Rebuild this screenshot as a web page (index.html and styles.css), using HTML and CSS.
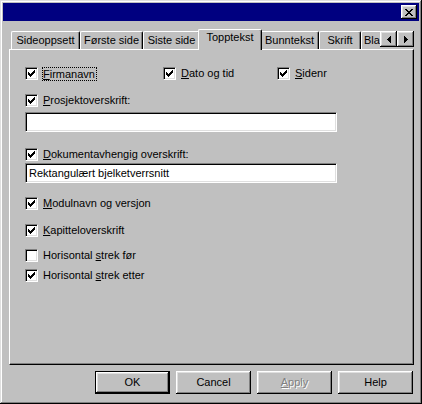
FILE: index.html
```html
<!DOCTYPE html>
<html>
<head>
<meta charset="utf-8">
<title>Topptekst</title>
<link rel="stylesheet" href="styles.css">
</head>
<body>
<div class="window">
  <div class="titlebar">
    <div class="close">
      <svg width="8" height="7" viewBox="0 0 8 7" shape-rendering="crispEdges"><path d="M0 0h2v1H0z M6 0h2v1H6z M1 1h2v1H1z M5 1h2v1H5z M2 2h4v1H2z M3 3h2v1H3z M2 4h4v1H2z M1 5h2v1H1z M5 5h2v1H5z M0 6h2v1H0z M6 6h2v1H6z" fill="#000"/></svg>
    </div>
  </div>
  <div class="content">
    <div class="tabrow">
      <div class="tabs">
        <div class="tab w1">Sideoppsett</div>
        <div class="tab w2">Første side</div>
        <div class="tab w3">Siste side</div>
        <div class="tab w4 active">Topptekst</div>
        <div class="tab w5">Bunntekst</div>
        <div class="tab w6">Skrift</div>
        <div class="tab w7">Blad</div>
      </div>
      <div class="arrows">
        <div class="arrow"><svg width="4" height="7" viewBox="0 0 4 7" shape-rendering="crispEdges"><path d="M3 0h1v7H3z M2 1h1v5H2z M1 2h1v3H1z M0 3h1v1H0z" fill="#000"/></svg></div>
        <div class="arrow"><svg width="4" height="7" viewBox="0 0 4 7" shape-rendering="crispEdges"><path d="M0 0h1v7H0z M1 1h1v5H1z M2 2h1v3H2z M3 3h1v1H3z" fill="#000"/></svg></div>
      </div>
    </div>
    <div class="panel">
      <div class="row-three">
        <div class="check">
          <span class="cb"><svg width="7" height="7" viewBox="0 0 7 7" shape-rendering="crispEdges"><path d="M0 2h1v3H0z M1 3h1v3H1z M2 4h1v3H2z M3 3h1v3H3z M4 2h1v3H4z M5 1h1v3H5z M6 0h1v3H6z" fill="#000"/></svg></span>
          <span class="label focus"><u>F</u>irmanavn</span>
        </div>
        <div class="check">
          <span class="cb"><svg width="7" height="7" viewBox="0 0 7 7" shape-rendering="crispEdges"><path d="M0 2h1v3H0z M1 3h1v3H1z M2 4h1v3H2z M3 3h1v3H3z M4 2h1v3H4z M5 1h1v3H5z M6 0h1v3H6z" fill="#000"/></svg></span>
          <span class="label"><u>D</u>ato og tid</span>
        </div>
        <div class="check">
          <span class="cb"><svg width="7" height="7" viewBox="0 0 7 7" shape-rendering="crispEdges"><path d="M0 2h1v3H0z M1 3h1v3H1z M2 4h1v3H2z M3 3h1v3H3z M4 2h1v3H4z M5 1h1v3H5z M6 0h1v3H6z" fill="#000"/></svg></span>
          <span class="label"><u>S</u>idenr</span>
        </div>
      </div>

      <div class="check m14">
        <span class="cb"><svg width="7" height="7" viewBox="0 0 7 7" shape-rendering="crispEdges"><path d="M0 2h1v3H0z M1 3h1v3H1z M2 4h1v3H2z M3 3h1v3H3z M4 2h1v3H4z M5 1h1v3H5z M6 0h1v3H6z" fill="#000"/></svg></span>
        <span class="label"><u>P</u>rosjektoverskrift:</span>
      </div>
      <div class="field m5"></div>

      <div class="check m16">
        <span class="cb"><svg width="7" height="7" viewBox="0 0 7 7" shape-rendering="crispEdges"><path d="M0 2h1v3H0z M1 3h1v3H1z M2 4h1v3H2z M3 3h1v3H3z M4 2h1v3H4z M5 1h1v3H5z M6 0h1v3H6z" fill="#000"/></svg></span>
        <span class="label"><u>D</u>okumentavhengig overskrift:</span>
      </div>
      <div class="field m2">Rektangulært bjelketverrsnitt</div>

      <div class="check m14">
        <span class="cb"><svg width="7" height="7" viewBox="0 0 7 7" shape-rendering="crispEdges"><path d="M0 2h1v3H0z M1 3h1v3H1z M2 4h1v3H2z M3 3h1v3H3z M4 2h1v3H4z M5 1h1v3H5z M6 0h1v3H6z" fill="#000"/></svg></span>
        <span class="label"><u>M</u>odulnavn og versjon</span>
      </div>
      <div class="check m14">
        <span class="cb"><svg width="7" height="7" viewBox="0 0 7 7" shape-rendering="crispEdges"><path d="M0 2h1v3H0z M1 3h1v3H1z M2 4h1v3H2z M3 3h1v3H3z M4 2h1v3H4z M5 1h1v3H5z M6 0h1v3H6z" fill="#000"/></svg></span>
        <span class="label"><u>K</u>apitteloverskrift</span>
      </div>
      <div class="check m12">
        <span class="cb"></span>
        <span class="label">Horisontal <u>s</u>trek før</span>
      </div>
      <div class="check m7">
        <span class="cb"><svg width="7" height="7" viewBox="0 0 7 7" shape-rendering="crispEdges"><path d="M0 2h1v3H0z M1 3h1v3H1z M2 4h1v3H2z M3 3h1v3H3z M4 2h1v3H4z M5 1h1v3H5z M6 0h1v3H6z" fill="#000"/></svg></span>
        <span class="label">Horisontal <u>s</u>trek etter</span>
      </div>
    </div>
    <div class="buttons">
      <div class="btn default">OK</div>
      <div class="btn">Cancel</div>
      <div class="btn disabled"><u>A</u>pply</div>
      <div class="btn">Help</div>
    </div>
  </div>
</div>
</body>
</html>
```

FILE: styles.css
```css
html, body {
  margin: 0;
  padding: 0;
  background: #c0c0c0;
}

body {
  font-family: "Liberation Sans", Arial, sans-serif;
  font-size: 11px;
  color: #000;
}

.window {
  width: 422px;
  height: 404px;
  box-sizing: border-box;
  padding: 3px;
  background: #c0c0c0;
  box-shadow: inset -1px -1px #000, inset 1px 1px #dfdfdf, inset -2px -2px #808080, inset 2px 2px #fff;
}

.titlebar {
  height: 18px;
  background: #000080;
  display: flex;
  justify-content: flex-end;
  align-items: center;
  padding-right: 2px;
}

.close {
  width: 16px;
  height: 14px;
  box-sizing: border-box;
  background: #c0c0c0;
  box-shadow: inset -1px -1px #000, inset 1px 1px #fff, inset -2px -2px #808080, inset 2px 2px #dfdfdf;
  display: flex;
  align-items: center;
  justify-content: center;
  padding-right: 1px;
}

.close svg {
  display: block;
}

.content {
  padding: 8px 5px 0 6px;
}

.tabrow {
  display: flex;
  height: 21px;
  margin-bottom: -1px;
  position: relative;
  z-index: 1;
}

.tabs {
  flex: 1;
  min-width: 0;
  display: flex;
  align-items: flex-start;
  overflow: hidden;
  padding-left: 2px;
  height: 21px;
}

.tab {
  flex: none;
  box-sizing: border-box;
  height: 18px;
  margin-top: 2px;
  line-height: 16px;
  text-align: center;
  white-space: nowrap;
  background: #c0c0c0;
  border-left: 1px solid #fff;
  border-top: 1px solid #fff;
  border-right: 1px solid #000;
  border-radius: 2px 2px 0 0;
  box-shadow: inset -1px 0 #808080;
}

.tab.active {
  height: 21px;
  margin: 0 -2px;
  line-height: 15px;
  position: relative;
  z-index: 2;
}

.w1 { width: 69px; }
.w2 { width: 63px; }
.w3 { width: 57px; }
.w4 { width: 64px; }
.w5 { width: 59px; }
.w6 { width: 42px; }
.w7 { width: 40px; text-align: left; padding-left: 2px; }

.arrows {
  display: flex;
  margin-top: 2px;
  height: 16px;
}

.arrow {
  width: 17px;
  height: 16px;
  box-sizing: border-box;
  background: #c0c0c0;
  box-shadow: inset -1px -1px #000, inset 1px 1px #fff, inset -2px -2px #808080, inset 2px 2px #dfdfdf;
  display: flex;
  align-items: center;
  justify-content: center;
}

.arrow svg {
  display: block;
}

.panel {
  height: 316px;
  box-sizing: border-box;
  border: 1px solid;
  border-color: #fff #000 #000 #fff;
  box-shadow: inset -1px -1px #808080;
  padding: 17px 0 0 15px;
  display: flex;
  flex-direction: column;
  align-items: flex-start;
}

.row-three {
  display: grid;
  grid-template-columns: 138px 114px auto;
  height: 13px;
}

.check {
  display: flex;
  align-items: center;
  height: 13px;
  gap: 5px;
  white-space: nowrap;
}

.cb {
  width: 13px;
  height: 13px;
  box-sizing: border-box;
  flex: none;
  background: #fff;
  border: 1px solid;
  border-color: #808080 #fff #fff #808080;
  box-shadow: inset 1px 1px #000, inset -1px -1px #dfdfdf;
  display: flex;
  align-items: center;
  justify-content: center;
}

.cb svg {
  display: block;
}

.label {
  line-height: 13px;
}

.label u {
  text-underline-offset: 1px;
}

.focus {
  border: 1px dotted #000;
  line-height: 12px;
  margin-left: -1px;
  padding: 0 1px 0 0;
}

.m2 { margin-top: 2px; }
.m5 { margin-top: 5px; }
.m7 { margin-top: 7px; }
.m12 { margin-top: 12px; }
.m14 { margin-top: 14px; }
.m16 { margin-top: 16px; }

.field {
  width: 312px;
  height: 20px;
  box-sizing: border-box;
  background: #fff;
  border: 1px solid;
  border-color: #808080 #fff #fff #808080;
  box-shadow: inset 1px 1px #000, inset -1px -1px #dfdfdf;
  padding: 2px 3px;
  line-height: 15px;
  white-space: nowrap;
}

.buttons {
  display: flex;
  justify-content: flex-end;
  gap: 6px;
  margin-top: 6px;
  padding-right: 1px;
}

.btn {
  width: 75px;
  height: 23px;
  box-sizing: border-box;
  background: #c0c0c0;
  box-shadow: inset -1px -1px #000, inset 1px 1px #fff, inset -2px -2px #808080, inset 2px 2px #dfdfdf;
  display: flex;
  align-items: center;
  justify-content: center;
  line-height: 13px;
}

.btn.default {
  border: 1px solid #000;
}

.btn.disabled {
  color: #808080;
  text-shadow: 1px 1px 0 #fff;
}
```
